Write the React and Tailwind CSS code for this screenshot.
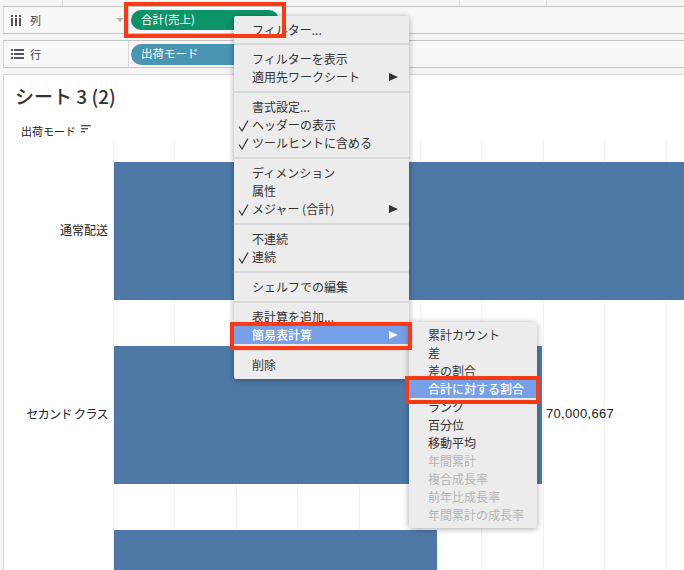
const GRID_LINES = [0, 1, 2, 3, 4, 5, 6, 7, 8, 9];

const Check = () => (
  <svg width="11" height="12" viewBox="0 0 11 12" fill="none" className="absolute left-[4px] top-[4px]">
    <path d="M1 6.5 L4 11 L10 0.5" stroke="#333" strokeWidth="1.2" />
  </svg>
);

const Arrow = ({ color = '#333' }) => (
  <svg width="9" height="8" viewBox="0 0 9 8" className="absolute left-[155px] top-[5px]">
    <path d="M0 0 L9 4 L0 8 Z" fill={color} />
  </svg>
);

const Sep = ({ first }) => <div className={`${first ? 'mt-[4px]' : 'mt-[5px]'} mb-[5px] h-[2px] bg-[#d9d9d9]`} />;

const Item = ({ label, checked, arrow, active }) => (
  <div
    className={`relative h-[18px] pl-[18px] leading-[18px] whitespace-nowrap ${
      active ? 'text-white font-medium' : 'text-[#333]'
    }`}
  >
    {checked && <Check />}
    {label}
    {arrow && <Arrow color={active ? '#fff' : '#333'} />}
  </div>
);

const SubItem = ({ label, disabled }) => (
  <div className={`h-[18px] pl-[19px] leading-[18px] whitespace-nowrap ${disabled ? 'text-[#b5b5b5]' : 'text-[#333]'}`}>
    {label}
  </div>
);

const ShelfRow = ({ icon, label, caret, children }) => (
  <div className="flex h-[28px] border-y border-[#c4c4c4] bg-[#f8f8f8]">
    <div className="flex w-[126px] items-center border-x border-[#d8d8d8]">
      <div className="ml-[7px] w-[19px]">{icon}</div>
      <span className="text-[11px] text-[#444]">{label}</span>
      {caret && <span className="ml-auto mr-[4px] h-0 w-0 border-x-[4px] border-t-[4px] border-x-transparent border-t-[#b5b5b5]" />}
    </div>
    <div className="flex flex-1 items-center pl-[2px]">{children}</div>
  </div>
);

export default function App() {
  return (
    <div
      className="relative h-[570px] w-[684px] overflow-hidden bg-[#f5f5f5] pl-[3px]"
      style={{ fontFamily: '"Noto Sans CJK JP", "Liberation Sans", sans-serif' }}
    >
      {/* top strip */}
      <div className="-ml-[3px] flex h-[6px]">
        <div className="ml-[62px] w-px bg-[#dcdcdc]" />
        <div className="ml-[396px] w-px bg-[#dcdcdc]" />
        <div className="ml-[86px] w-px bg-[#dcdcdc]" />
      </div>

      {/* shelves */}
      <div className="flex flex-col gap-[6px]">
        <ShelfRow
          label="列"
          caret
          icon={
            <svg width="11" height="11" viewBox="0 0 11 11" fill="#555">
              <rect x="0" y="0" width="2" height="2" />
              <rect x="4" y="0" width="2" height="2" />
              <rect x="8" y="0" width="2" height="2" />
              <rect x="0" y="3" width="2" height="8" />
              <rect x="4" y="3" width="2" height="8" />
              <rect x="8" y="3" width="2" height="8" />
            </svg>
          }
        >
          <div className="flex h-[20px] w-[148px] items-center rounded-full bg-[#0b9468] pl-[10px] text-[11.5px] text-white">
            合計(売上)
          </div>
        </ShelfRow>
        <ShelfRow
          label="行"
          icon={
            <svg width="13" height="10" viewBox="0 0 13 10" fill="#555">
              <rect x="0" y="0" width="2" height="2" />
              <rect x="3" y="0" width="10" height="2" />
              <rect x="0" y="4" width="2" height="2" />
              <rect x="3" y="4" width="10" height="2" />
              <rect x="0" y="8" width="2" height="2" />
              <rect x="3" y="8" width="10" height="2" />
            </svg>
          }
        >
          <div className="flex h-[21px] w-[148px] items-center rounded-full bg-[#4a94b4] pl-[10px] text-[11.5px] text-white">
            出荷モード
          </div>
        </ShelfRow>
      </div>

      {/* sheet */}
      <div className="relative mt-[6px] h-[496px] overflow-hidden border-l border-t border-[#d8d8d8] bg-white">
        <div className="absolute left-[109px] right-0 top-[65px] bottom-0 flex">
          {GRID_LINES.map((i) => (
            <div key={i} className="h-full w-[61.4px] shrink-0 border-l border-[#f0f0f0]" />
          ))}
        </div>

        <div className="relative">
          <div className="h-[65px] pl-[11px] pt-[7px]">
            <h1 className="text-[19px] font-medium leading-[27px] text-[#333]">シート 3 (2)</h1>
            <div className="mt-[14px] flex items-center pl-[6px] text-[11px] leading-[16px] text-[#222]">
              出荷モード
              <svg width="11" height="10" viewBox="0 0 11 10" fill="#555" className="ml-[5px] -mt-[3px]">
                <rect x="0" y="0" width="10" height="1.4" />
                <rect x="0" y="3" width="7" height="1.4" />
                <rect x="0" y="6" width="4" height="1.4" />
              </svg>
            </div>
          </div>
          <div className="flex flex-col gap-[46px] pt-[22px]">
            <div className="flex h-[138px] items-center">
              <div className="w-[104px] pb-[2px] text-right text-[12px] text-[#222]">通常配送</div>
              <div className="ml-[6px] h-full flex-1 bg-[#4e79a7]" />
            </div>
            <div className="flex h-[138px] items-center">
              <div className="w-[104px] pb-[2px] text-right text-[12px] tracking-[-0.6px] text-[#222]">セカンド クラス</div>
              <div className="ml-[6px] h-full w-[428px] bg-[#4e79a7]" />
              <div
                className="ml-[4px] pb-[2px] text-[13px] tracking-[0.3px] text-[#222]"
                style={{ fontFamily: '"Liberation Sans", sans-serif' }}
              >
                70,000,667
              </div>
            </div>
            <div className="flex h-[138px] items-center">
              <div className="w-[104px]" />
              <div className="ml-[6px] h-full w-[323px] bg-[#4e79a7]" />
            </div>
          </div>
        </div>
      </div>

      {/* context menu */}
      <div className="absolute left-[234px] top-[16px] w-[175px] rounded-[2px] bg-[#ececec] py-[5px] text-[12px] shadow-[0_1px_6px_rgba(0,0,0,0.35)]">
        <Item label="フィルター..." />
        <Sep first />
        <Item label="フィルターを表示" />
        <Item label="適用先ワークシート" arrow />
        <Sep />
        <Item label="書式設定..." />
        <Item label="ヘッダーの表示" checked />
        <Item label="ツールヒントに含める" checked />
        <Sep />
        <Item label="ディメンション" />
        <Item label="属性" />
        <Item label="メジャー (合計)" checked arrow />
        <Sep />
        <Item label="不連続" />
        <Item label="連続" checked />
        <Sep />
        <Item label="シェルフでの編集" />
        <Sep />
        <Item label="表計算を追加..." />
        <div className="bg-[#76a0e8]">
          <Item label="簡易表計算" arrow active />
        </div>
        <Sep />
        <Item label="削除" />
      </div>

      {/* submenu */}
      <div className="absolute left-[409px] top-[322px] w-[128px] rounded-[2px] bg-[#ececec] py-[4px] text-[12px] shadow-[0_1px_6px_rgba(0,0,0,0.35)]">
        <SubItem label="累計カウント" />
        <SubItem label="差" />
        <SubItem label="差の割合" />
        <div className="h-[18px] bg-[#76a0e8] pl-[19px] font-medium leading-[18px] text-white">合計に対する割合</div>
        <SubItem label="ランク" />
        <SubItem label="百分位" />
        <SubItem label="移動平均" />
        <SubItem label="年間累計" disabled />
        <SubItem label="複合成長率" disabled />
        <SubItem label="前年比成長率" disabled />
        <SubItem label="年間累計の成長率" disabled />
      </div>

      {/* red annotations */}
      <div className="absolute left-[124px] top-[2px] h-[36px] w-[162px] border-[4px] border-[#f93a14]" />
      <div className="absolute left-[230px] top-[322px] h-[28px] w-[182px] border-[4px] border-[#f93a14]" />
      <div className="absolute left-[405px] top-[376px] h-[28px] w-[135px] border-[4px] border-[#f93a14]" />
    </div>
  );
}
